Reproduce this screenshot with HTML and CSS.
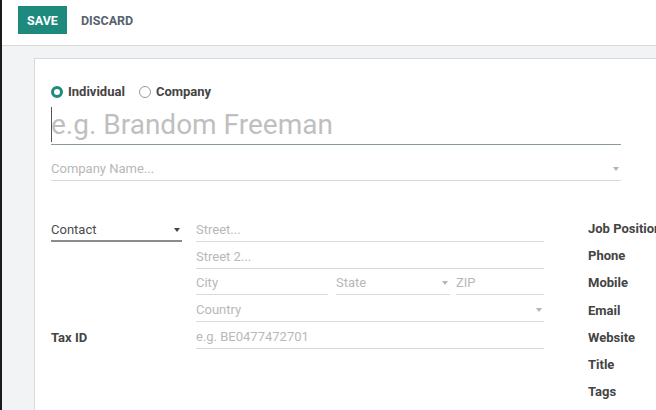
FILE: index.html
```html
<!DOCTYPE html>
<html>
<head>
<meta charset="utf-8">
<link rel="stylesheet" href="styles.css">
</head>
<body>
<div class="frame">
  <div class="control-panel">
    <button class="btn-save">SAVE</button>
    <button class="btn-discard">DISCARD</button>
  </div>
  <div class="content">
    <div class="sheet">
      <div class="radios">
        <label class="radio"><span class="dot checked"></span>Individual</label>
        <label class="radio"><span class="dot"></span>Company</label>
      </div>
      <div class="name-input"><span class="cursor"></span>e.g. Brandom Freeman</div>
      <div class="company-row">
        <span class="ph">Company Name...</span>
        <span class="caret light"></span>
      </div>
      <div class="groups">
        <div class="col-left">
          <div class="row select-row"><span>Contact</span><span class="caret dark"></span></div>
          <div class="row blank"></div>
          <div class="row blank"></div>
          <div class="row blank"></div>
          <div class="row label">Tax ID</div>
        </div>
        <div class="col-address">
          <div class="row field"><span class="ph">Street...</span></div>
          <div class="row field"><span class="ph">Street 2...</span></div>
          <div class="row split">
            <div class="field city"><span class="ph">City</span></div>
            <div class="field state"><span class="ph">State</span><span class="caret light"></span></div>
            <div class="field zip"><span class="ph">ZIP</span></div>
          </div>
          <div class="row field"><span class="ph">Country</span><span class="caret light"></span></div>
          <div class="row field"><span class="ph">e.g. BE0477472701</span></div>
        </div>
        <div class="col-right">
          <div class="row label">Job Position</div>
          <div class="row label">Phone</div>
          <div class="row label">Mobile</div>
          <div class="row label">Email</div>
          <div class="row label">Website</div>
          <div class="row label">Title</div>
          <div class="row label">Tags</div>
        </div>
      </div>
    </div>
  </div>
</div>
</body>
</html>
```

FILE: styles.css
```css
html, body {
  margin: 0;
  padding: 0;
  height: 100%;
  overflow: hidden;
}
body {
  font-family: Roboto, "Liberation Sans", sans-serif;
  font-size: 13px;
  color: #4c4c4c;
  background: #fff;
}
.frame {
  border-left: 2px solid #1a1a1a;
  height: 410px;
  display: flex;
  flex-direction: column;
}
.control-panel {
  height: 46px;
  border-bottom: 1px solid #d8d8d8;
  display: flex;
  align-items: flex-start;
  padding: 6px 0 0 16px;
  box-sizing: border-box;
  flex: none;
  background: #fff;
}
.btn-save {
  height: 28px;
  width: 49px;
  border: none;
  background: #1e8a7e;
  color: #fff;
  font-family: Roboto, sans-serif;
  font-weight: 700;
  font-size: 12.5px;
  padding: 0;
}
.btn-discard {
  height: 28px;
  border: none;
  background: transparent;
  color: #56636d;
  font-family: Roboto, sans-serif;
  font-weight: 700;
  font-size: 12.5px;
  padding: 0 0 0 14px;
}
.content {
  flex: 1;
  background: #f2f3f5;
  padding: 12px 0 0 32px;
  overflow: hidden;
}
.sheet {
  background: #fff;
  border: 1px solid #dadada;
  width: 700px;
  height: 500px;
  padding: 26px 16px 0 16px;
  box-sizing: border-box;
}
.radios {
  display: flex;
  gap: 14px;
  height: 14px;
  align-items: center;
}
.radio {
  display: flex;
  align-items: center;
  font-weight: 700;
  color: #444;
  line-height: 14px;
}
.dot {
  width: 12px;
  height: 12px;
  border-radius: 50%;
  border: 1px solid #9a9a9a;
  box-sizing: border-box;
  margin-right: 5px;
}
.dot.checked {
  border: 3.5px solid #1e8a7e;
}
.name-input {
  margin-top: 7px;
  width: 570px;
  height: 39px;
  border-bottom: 1px solid #8a9a9c;
  box-sizing: border-box;
  font-size: 28px;
  line-height: 38px;
  color: #bfbfbf;
  position: relative;
}
.cursor {
  position: absolute;
  left: 0;
  top: 1px;
  width: 1px;
  height: 35px;
  background: #555;
}
.company-row {
  margin-top: 13px;
  width: 570px;
  height: 23px;
  border-bottom: 1px solid #d9d9d9;
  box-sizing: border-box;
  display: flex;
  align-items: flex-end;
  justify-content: space-between;
  padding-bottom: 3px;
  line-height: 16px;
}
.ph {
  color: #b8b8b8;
}
.caret {
  width: 0;
  height: 0;
  border-left: 3.5px solid transparent;
  border-right: 3.5px solid transparent;
  border-top: 4px solid #b5b5b5;
  margin: 0 2px 6px 0;
}
.caret.dark {
  border-top-color: #444;
}
.groups {
  margin-top: 34px;
  display: flex;
}
.row {
  height: 26.75px;
  box-sizing: border-box;
  display: flex;
  align-items: flex-end;
  padding-bottom: 3px;
  line-height: 16px;
}
.col-left {
  width: 131px;
  margin-right: 14px;
}
.select-row {
  border-bottom: 2px solid #8c8c8c;
  justify-content: space-between;
  padding-bottom: 2px;
  color: #4a4a4a;
}
.label {
  font-weight: 700;
  color: #444;
  white-space: nowrap;
}
.col-address {
  width: 348px;
  margin-right: 44px;
}
.field {
  border-bottom: 1px solid #d9d9d9;
  justify-content: space-between;
}
.split {
  padding-bottom: 0;
}
.split .field {
  height: 26.75px;
  box-sizing: border-box;
  display: flex;
  align-items: flex-end;
  padding-bottom: 3px;
}
.city { width: 132px; margin-right: 8px; }
.state { width: 114px; margin-right: 6px; }
.zip { width: 88px; }
.col-right {
  flex: 1;
}
.col-right .row {
  height: 27.15px;
  padding-bottom: 5px;
}
```
